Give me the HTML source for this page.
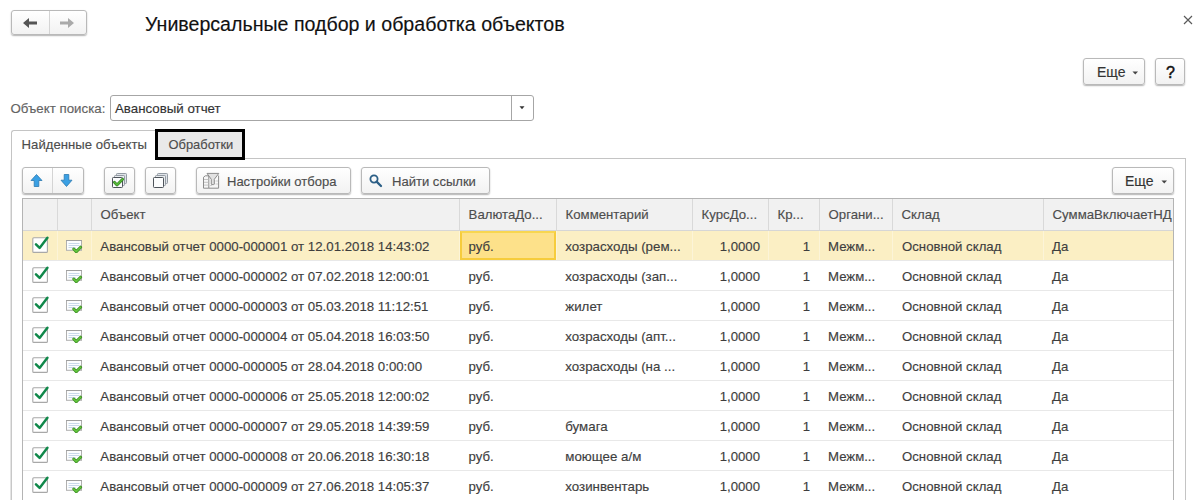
<!DOCTYPE html>
<html><head><meta charset="utf-8">
<style>
*{box-sizing:border-box;margin:0;padding:0}
html,body{width:1200px;height:500px;overflow:hidden;background:#fff}
body{position:relative;font-family:"Liberation Sans",sans-serif;font-size:13px;color:#4d4d4d}
.a{position:absolute}
.t{position:absolute;white-space:pre;line-height:1;-webkit-text-stroke:0.15px currentColor}
.b{position:absolute;border:1px solid #b9b9b9;border-radius:3px;background:linear-gradient(#fff,#f2f2f2);box-shadow:0 1px 1.5px rgba(0,0,0,.3)}
</style></head><body>
<div class="b" style="left:11px;top:10px;width:76px;height:25px"></div>
<div class="a" style="left:49px;top:11px;width:1px;height:23px;background:#d4d4d4"></div>
<svg class="a" style="left:22px;top:17px" width="16" height="12" viewBox="0 0 16 12"><path d="M1 6 L7 1 L7 4.5 L15 4.5 L15 7.5 L7 7.5 L7 11 Z" fill="#555"/></svg>
<svg class="a" style="left:59px;top:17px" width="16" height="12" viewBox="0 0 16 12"><path d="M15 6 L9 1 L9 4.5 L1 4.5 L1 7.5 L9 7.5 L9 11 Z" fill="#aaa"/></svg>
<div class="t" style="left:145px;top:14.6px;font-size:19.6px;color:#111;">Универсальные подбор и обработка объектов</div>
<svg class="a" style="left:1183px;top:15px" width="10" height="10" viewBox="0 0 10 10"><path d="M1 1 L9 9 M9 1 L1 9" stroke="#5a5a5a" stroke-width="1.15"/></svg>
<div class="b" style="left:1083px;top:58px;width:62px;height:27px"></div>
<div class="t" style="left:1097px;top:64.5px;font-size:14px;color:#333;">Еще</div>
<svg class="a" style="left:1132px;top:71px" width="7" height="4" viewBox="0 0 7 4"><path d="M0.5 0.5 L6 0.5 L3.25 3.5Z" fill="#444"/></svg>
<div class="b" style="left:1155px;top:58px;width:30px;height:27px"></div>
<div class="t" style="left:1166px;top:64.5px;font-size:16px;color:#111;-webkit-text-stroke:0.5px #111">?</div>
<div class="t" style="left:10.5px;top:102px;font-size:13.3px;color:#636363;">Объект поиска:</div>
<div class="a" style="left:110px;top:95px;width:424px;height:26px;border:1px solid #a6a6a6;border-radius:3px;background:#fff"></div>
<div class="a" style="left:511px;top:96px;width:1px;height:24px;background:#a6a6a6"></div>
<svg class="a" style="left:519px;top:106px" width="6" height="4" viewBox="0 0 6 4"><path d="M0.5 0.2 L5.5 0.2 L3 3.2Z" fill="#333"/></svg>
<div class="t" style="left:115px;top:102px;font-size:13.3px;color:#333;">Авансовый отчет</div>
<div class="a" style="left:11px;top:130px;width:146px;height:40px;border:1px solid #c4c4c4;border-bottom:none;border-right:none;border-radius:3px 0 0 0"></div>
<div class="a" style="left:10px;top:160px;width:1px;height:340px;background:#e4e4e4"></div>
<div class="a" style="left:11px;top:160px;width:1px;height:340px;background:#c8c8c8"></div>
<div class="a" style="left:245px;top:158px;width:941px;height:1px;background:#c4c4c4"></div>
<div class="t" style="left:21.6px;top:137.6px;font-size:13.15px;color:#4d4d4d;">Найденные объекты</div>
<div class="a" style="left:155px;top:129px;width:90px;height:31px;border:3px solid #000;background:#e9e9e9"></div>
<div class="t" style="left:168.5px;top:138.8px;font-size:12.9px;color:#4d4d4d;">Обработки</div>
<div class="b" style="left:22px;top:167px;width:62px;height:27px"></div>
<div class="a" style="left:52px;top:168px;width:1px;height:25px;background:#d4d4d4"></div>
<svg class="a" style="left:30px;top:174px" width="13" height="13" viewBox="0 0 13 13"><path d="M6.5 0.5 L12 6.5 L8.8 6.5 L8.8 12.5 L4.2 12.5 L4.2 6.5 L1 6.5 Z" fill="#3aa0e4" stroke="#2b78b0" stroke-width="0.8"/></svg>
<svg class="a" style="left:60px;top:174px" width="13" height="13" viewBox="0 0 13 13"><path d="M6.5 12.5 L12 6.2 L8.8 6.2 L8.8 0.5 L4.2 0.5 L4.2 6.2 L1 6.2 Z" fill="#3aa0e4" stroke="#2b78b0" stroke-width="0.8"/></svg>
<div class="b" style="left:104px;top:167px;width:31px;height:27px"></div>
<svg class="a" style="left:111px;top:172px" width="18" height="18" viewBox="0 0 18 18"><rect x="5.5" y="1.5" width="10" height="10" rx="0.8" fill="#dfe3e8" stroke="#939ba3"/><rect x="3.5" y="3.5" width="10" height="10" rx="0.8" fill="#e9ecef" stroke="#939ba3"/><rect x="1.5" y="5.5" width="10" height="10" rx="0.8" fill="#fbfcfd" stroke="#4d535a"/><path d="M3.4 10.3 L6 12.9 L11.6 7.2" fill="none" stroke="#2e7d1e" stroke-width="2.8" stroke-linecap="round" stroke-linejoin="round"/><path d="M3.4 10.3 L6 12.9 L11.6 7.2" fill="none" stroke="#58bb3a" stroke-width="1.5" stroke-linecap="round" stroke-linejoin="round"/></svg>
<div class="b" style="left:145px;top:167px;width:31px;height:27px"></div>
<svg class="a" style="left:152px;top:172px" width="18" height="18" viewBox="0 0 18 18"><rect x="5.5" y="1.5" width="10" height="10" rx="0.8" fill="#dfe3e8" stroke="#939ba3"/><rect x="3.5" y="3.5" width="10" height="10" rx="0.8" fill="#e9ecef" stroke="#939ba3"/><rect x="1.5" y="5.5" width="10" height="10" rx="0.8" fill="#fbfcfd" stroke="#4d535a"/></svg>
<div class="b" style="left:196px;top:167px;width:155px;height:27px"></div>
<svg class="a" style="left:202px;top:172px" width="18" height="18" viewBox="0 0 18 18"><path d="M1.5 16.2 V5.2 L3.3 3.8 H6.8 V16.2 Z" fill="#f6f6f6" stroke="#8c8c8c"/><path d="M2 7.5h4.3M2 10.3h4.3M2 13.1h4.3" stroke="#c4c4c4"/><path d="M6.8 16.2 H16.6 V3.5" fill="none" stroke="#8c8c8c"/><path d="M5 1.4 H16.8 L12.3 7.3 V12 Q12.3 12.6 11.6 12.6 H10 Q9.3 12.6 9.3 12 V7.3 Z" fill="#e2e2e2" stroke="#8c8c8c"/><path d="M8 13.5h2M13.5 9h2.5M13.5 12h2.5" stroke="#cfcfcf"/></svg>
<div class="t" style="left:227px;top:175px;font-size:13px;color:#4d4d4d;">Настройки отбора</div>
<div class="b" style="left:361px;top:167px;width:129px;height:27px"></div>
<svg class="a" style="left:369px;top:174px" width="14" height="14" viewBox="0 0 14 14"><circle cx="5" cy="5" r="3.6" fill="none" stroke="#2c5f86" stroke-width="1.8"/><path d="M7.6 7.6 L12 12" stroke="#2c5f86" stroke-width="2.3" stroke-linecap="round"/></svg>
<div class="t" style="left:392px;top:175px;font-size:13.05px;color:#4d4d4d;">Найти ссылки</div>
<div class="b" style="left:1112px;top:167px;width:62px;height:27px"></div>
<div class="t" style="left:1125px;top:173.5px;font-size:14px;color:#333;">Еще</div>
<svg class="a" style="left:1161px;top:180px" width="7" height="4" viewBox="0 0 7 4"><path d="M0.5 0.5 L6 0.5 L3.25 3.5Z" fill="#444"/></svg>
<div class="a" style="left:22px;top:198px;width:1152px;height:1px;background:#b4b4b4"></div>
<div class="a" style="left:22px;top:198px;width:1px;height:302px;background:#b4b4b4"></div>
<div class="a" style="left:1173px;top:198px;width:1px;height:302px;background:#b4b4b4"></div>
<div class="a" style="left:23px;top:199px;width:1150px;height:31px;background:#f1f1f1"></div>
<div class="a" style="left:23px;top:230px;width:1150px;height:1px;background:#d6d6d6"></div>
<div class="a" style="left:57px;top:199px;width:1px;height:31px;background:#d9d9d9"></div>
<div class="a" style="left:91px;top:199px;width:1px;height:31px;background:#d9d9d9"></div>
<div class="a" style="left:459px;top:199px;width:1px;height:31px;background:#d9d9d9"></div>
<div class="a" style="left:556px;top:199px;width:1px;height:31px;background:#d9d9d9"></div>
<div class="a" style="left:692px;top:199px;width:1px;height:31px;background:#d9d9d9"></div>
<div class="a" style="left:768px;top:199px;width:1px;height:31px;background:#d9d9d9"></div>
<div class="a" style="left:819px;top:199px;width:1px;height:31px;background:#d9d9d9"></div>
<div class="a" style="left:892px;top:199px;width:1px;height:31px;background:#d9d9d9"></div>
<div class="a" style="left:1043px;top:199px;width:1px;height:31px;background:#d9d9d9"></div>
<div class="t" style="left:100.6px;top:208px;font-size:13.2px;color:#4d4d4d;">Объект</div>
<div class="t" style="left:468.6px;top:208px;font-size:13.2px;color:#4d4d4d;">ВалютаДо...</div>
<div class="t" style="left:565.6px;top:208px;font-size:13.2px;color:#4d4d4d;">Комментарий</div>
<div class="t" style="left:701.6px;top:208px;font-size:13.2px;color:#4d4d4d;">КурсДо...</div>
<div class="t" style="left:777.6px;top:208px;font-size:13.2px;color:#4d4d4d;">Кр...</div>
<div class="t" style="left:828.6px;top:208px;font-size:13.2px;color:#4d4d4d;">Органи...</div>
<div class="t" style="left:901.6px;top:208px;font-size:13.2px;color:#4d4d4d;">Склад</div>
<div class="t" style="left:1052.6px;top:208px;font-size:13.2px;color:#4d4d4d;">СуммаВключаетНД</div>
<div class="a" style="left:23px;top:231px;width:1150px;height:29px;background:#fbefc4"></div>
<div class="a" style="left:57px;top:231px;width:1px;height:29px;background:#fcf4d8"></div>
<div class="a" style="left:91px;top:231px;width:1px;height:29px;background:#fcf4d8"></div>
<div class="a" style="left:459px;top:231px;width:1px;height:29px;background:#fcf4d8"></div>
<div class="a" style="left:556px;top:231px;width:1px;height:29px;background:#fcf4d8"></div>
<div class="a" style="left:692px;top:231px;width:1px;height:29px;background:#fcf4d8"></div>
<div class="a" style="left:768px;top:231px;width:1px;height:29px;background:#fcf4d8"></div>
<div class="a" style="left:819px;top:231px;width:1px;height:29px;background:#fcf4d8"></div>
<div class="a" style="left:892px;top:231px;width:1px;height:29px;background:#fcf4d8"></div>
<div class="a" style="left:1043px;top:231px;width:1px;height:29px;background:#fcf4d8"></div>
<div class="a" style="left:460px;top:231px;width:96px;height:29px;background:#fde18a;border:2px solid #f6cc3c;border-top-color:#f8d650;border-bottom-color:#f6cc3c"></div>
<div class="a" style="left:23px;top:260px;width:1150px;height:1px;background:#e8e8e8"></div>
<svg class="a" style="left:31px;top:236px" width="18" height="18" viewBox="0 0 18 18"><rect x="1.8" y="1.8" width="14.6" height="14.6" rx="1" fill="#fff" stroke="#a8a8a8" stroke-width="1.1"/><path d="M5 8.3 L8.6 11.9 L16.4 1.8" fill="none" stroke="#10884a" stroke-width="2.5" stroke-linecap="round" stroke-linejoin="round"/></svg>
<svg class="a" style="left:65px;top:239px" width="18" height="14" viewBox="0 0 18 14"><rect x="1.5" y="1.5" width="15" height="9.8" fill="#fcfdfe" stroke="#b0b0b0"/><path d="M1 1.5h16" stroke="#a0a0a0"/><path d="M3.5 4.5h11M3.5 6.5h11M3.5 8.5h7" stroke="#c2d4e8" stroke-width="0.9"/><path d="M8.8 10 L11.3 12.6 L15.6 8.2" fill="none" stroke="#3a8a22" stroke-width="3" stroke-linecap="round" stroke-linejoin="round"/><path d="M8.8 10 L11.3 12.6 L15.6 8.2" fill="none" stroke="#62c43c" stroke-width="1.6" stroke-linecap="round" stroke-linejoin="round"/></svg>
<div class="t" style="left:100.3px;top:240px;font-size:13.25px;color:#3e3e3e;">Авансовый отчет 0000-000001 от 12.01.2018 14:43:02</div>
<div class="t" style="left:468.6px;top:240px;font-size:13.2px;color:#3e3e3e;">руб.</div>
<div class="t" style="left:565.3px;top:240px;font-size:13.3px;color:#3e3e3e;">хозрасходы (рем...</div>
<div class="t" style="right:440px;top:240px;font-size:13.2px;color:#3e3e3e">1,0000</div>
<div class="t" style="right:390px;top:240px;font-size:13.2px;color:#3e3e3e">1</div>
<div class="t" style="left:828px;top:240px;font-size:13.2px;color:#3e3e3e;">Межм...</div>
<div class="t" style="left:902px;top:240px;font-size:13.2px;color:#3e3e3e;">Основной склад</div>
<div class="t" style="left:1052px;top:240px;font-size:13.2px;color:#3e3e3e;">Да</div>
<div class="a" style="left:23px;top:290px;width:1150px;height:1px;background:#e8e8e8"></div>
<svg class="a" style="left:31px;top:266px" width="18" height="18" viewBox="0 0 18 18"><rect x="1.8" y="1.8" width="14.6" height="14.6" rx="1" fill="#fff" stroke="#a8a8a8" stroke-width="1.1"/><path d="M5 8.3 L8.6 11.9 L16.4 1.8" fill="none" stroke="#10884a" stroke-width="2.5" stroke-linecap="round" stroke-linejoin="round"/></svg>
<svg class="a" style="left:65px;top:269px" width="18" height="14" viewBox="0 0 18 14"><rect x="1.5" y="1.5" width="15" height="9.8" fill="#fcfdfe" stroke="#b0b0b0"/><path d="M1 1.5h16" stroke="#a0a0a0"/><path d="M3.5 4.5h11M3.5 6.5h11M3.5 8.5h7" stroke="#c2d4e8" stroke-width="0.9"/><path d="M8.8 10 L11.3 12.6 L15.6 8.2" fill="none" stroke="#3a8a22" stroke-width="3" stroke-linecap="round" stroke-linejoin="round"/><path d="M8.8 10 L11.3 12.6 L15.6 8.2" fill="none" stroke="#62c43c" stroke-width="1.6" stroke-linecap="round" stroke-linejoin="round"/></svg>
<div class="t" style="left:100.3px;top:270px;font-size:13.25px;color:#3e3e3e;">Авансовый отчет 0000-000002 от 07.02.2018 12:00:01</div>
<div class="t" style="left:468.6px;top:270px;font-size:13.2px;color:#3e3e3e;">руб.</div>
<div class="t" style="left:565.3px;top:270px;font-size:13.3px;color:#3e3e3e;">хозрасходы (зап...</div>
<div class="t" style="right:440px;top:270px;font-size:13.2px;color:#3e3e3e">1,0000</div>
<div class="t" style="right:390px;top:270px;font-size:13.2px;color:#3e3e3e">1</div>
<div class="t" style="left:828px;top:270px;font-size:13.2px;color:#3e3e3e;">Межм...</div>
<div class="t" style="left:902px;top:270px;font-size:13.2px;color:#3e3e3e;">Основной склад</div>
<div class="t" style="left:1052px;top:270px;font-size:13.2px;color:#3e3e3e;">Да</div>
<div class="a" style="left:23px;top:320px;width:1150px;height:1px;background:#e8e8e8"></div>
<svg class="a" style="left:31px;top:296px" width="18" height="18" viewBox="0 0 18 18"><rect x="1.8" y="1.8" width="14.6" height="14.6" rx="1" fill="#fff" stroke="#a8a8a8" stroke-width="1.1"/><path d="M5 8.3 L8.6 11.9 L16.4 1.8" fill="none" stroke="#10884a" stroke-width="2.5" stroke-linecap="round" stroke-linejoin="round"/></svg>
<svg class="a" style="left:65px;top:299px" width="18" height="14" viewBox="0 0 18 14"><rect x="1.5" y="1.5" width="15" height="9.8" fill="#fcfdfe" stroke="#b0b0b0"/><path d="M1 1.5h16" stroke="#a0a0a0"/><path d="M3.5 4.5h11M3.5 6.5h11M3.5 8.5h7" stroke="#c2d4e8" stroke-width="0.9"/><path d="M8.8 10 L11.3 12.6 L15.6 8.2" fill="none" stroke="#3a8a22" stroke-width="3" stroke-linecap="round" stroke-linejoin="round"/><path d="M8.8 10 L11.3 12.6 L15.6 8.2" fill="none" stroke="#62c43c" stroke-width="1.6" stroke-linecap="round" stroke-linejoin="round"/></svg>
<div class="t" style="left:100.3px;top:300px;font-size:13.25px;color:#3e3e3e;">Авансовый отчет 0000-000003 от 05.03.2018 11:12:51</div>
<div class="t" style="left:468.6px;top:300px;font-size:13.2px;color:#3e3e3e;">руб.</div>
<div class="t" style="left:565.3px;top:300px;font-size:13.3px;color:#3e3e3e;">жилет</div>
<div class="t" style="right:440px;top:300px;font-size:13.2px;color:#3e3e3e">1,0000</div>
<div class="t" style="right:390px;top:300px;font-size:13.2px;color:#3e3e3e">1</div>
<div class="t" style="left:828px;top:300px;font-size:13.2px;color:#3e3e3e;">Межм...</div>
<div class="t" style="left:902px;top:300px;font-size:13.2px;color:#3e3e3e;">Основной склад</div>
<div class="t" style="left:1052px;top:300px;font-size:13.2px;color:#3e3e3e;">Да</div>
<div class="a" style="left:23px;top:350px;width:1150px;height:1px;background:#e8e8e8"></div>
<svg class="a" style="left:31px;top:326px" width="18" height="18" viewBox="0 0 18 18"><rect x="1.8" y="1.8" width="14.6" height="14.6" rx="1" fill="#fff" stroke="#a8a8a8" stroke-width="1.1"/><path d="M5 8.3 L8.6 11.9 L16.4 1.8" fill="none" stroke="#10884a" stroke-width="2.5" stroke-linecap="round" stroke-linejoin="round"/></svg>
<svg class="a" style="left:65px;top:329px" width="18" height="14" viewBox="0 0 18 14"><rect x="1.5" y="1.5" width="15" height="9.8" fill="#fcfdfe" stroke="#b0b0b0"/><path d="M1 1.5h16" stroke="#a0a0a0"/><path d="M3.5 4.5h11M3.5 6.5h11M3.5 8.5h7" stroke="#c2d4e8" stroke-width="0.9"/><path d="M8.8 10 L11.3 12.6 L15.6 8.2" fill="none" stroke="#3a8a22" stroke-width="3" stroke-linecap="round" stroke-linejoin="round"/><path d="M8.8 10 L11.3 12.6 L15.6 8.2" fill="none" stroke="#62c43c" stroke-width="1.6" stroke-linecap="round" stroke-linejoin="round"/></svg>
<div class="t" style="left:100.3px;top:330px;font-size:13.25px;color:#3e3e3e;">Авансовый отчет 0000-000004 от 05.04.2018 16:03:50</div>
<div class="t" style="left:468.6px;top:330px;font-size:13.2px;color:#3e3e3e;">руб.</div>
<div class="t" style="left:565.3px;top:330px;font-size:13.3px;color:#3e3e3e;">хозрасходы (апт...</div>
<div class="t" style="right:440px;top:330px;font-size:13.2px;color:#3e3e3e">1,0000</div>
<div class="t" style="right:390px;top:330px;font-size:13.2px;color:#3e3e3e">1</div>
<div class="t" style="left:828px;top:330px;font-size:13.2px;color:#3e3e3e;">Межм...</div>
<div class="t" style="left:902px;top:330px;font-size:13.2px;color:#3e3e3e;">Основной склад</div>
<div class="t" style="left:1052px;top:330px;font-size:13.2px;color:#3e3e3e;">Да</div>
<div class="a" style="left:23px;top:380px;width:1150px;height:1px;background:#e8e8e8"></div>
<svg class="a" style="left:31px;top:356px" width="18" height="18" viewBox="0 0 18 18"><rect x="1.8" y="1.8" width="14.6" height="14.6" rx="1" fill="#fff" stroke="#a8a8a8" stroke-width="1.1"/><path d="M5 8.3 L8.6 11.9 L16.4 1.8" fill="none" stroke="#10884a" stroke-width="2.5" stroke-linecap="round" stroke-linejoin="round"/></svg>
<svg class="a" style="left:65px;top:359px" width="18" height="14" viewBox="0 0 18 14"><rect x="1.5" y="1.5" width="15" height="9.8" fill="#fcfdfe" stroke="#b0b0b0"/><path d="M1 1.5h16" stroke="#a0a0a0"/><path d="M3.5 4.5h11M3.5 6.5h11M3.5 8.5h7" stroke="#c2d4e8" stroke-width="0.9"/><path d="M8.8 10 L11.3 12.6 L15.6 8.2" fill="none" stroke="#3a8a22" stroke-width="3" stroke-linecap="round" stroke-linejoin="round"/><path d="M8.8 10 L11.3 12.6 L15.6 8.2" fill="none" stroke="#62c43c" stroke-width="1.6" stroke-linecap="round" stroke-linejoin="round"/></svg>
<div class="t" style="left:100.3px;top:360px;font-size:13.25px;color:#3e3e3e;">Авансовый отчет 0000-000005 от 28.04.2018 0:00:00</div>
<div class="t" style="left:468.6px;top:360px;font-size:13.2px;color:#3e3e3e;">руб.</div>
<div class="t" style="left:565.3px;top:360px;font-size:13.3px;color:#3e3e3e;">хозрасходы (на ...</div>
<div class="t" style="right:440px;top:360px;font-size:13.2px;color:#3e3e3e">1,0000</div>
<div class="t" style="right:390px;top:360px;font-size:13.2px;color:#3e3e3e">1</div>
<div class="t" style="left:828px;top:360px;font-size:13.2px;color:#3e3e3e;">Межм...</div>
<div class="t" style="left:902px;top:360px;font-size:13.2px;color:#3e3e3e;">Основной склад</div>
<div class="t" style="left:1052px;top:360px;font-size:13.2px;color:#3e3e3e;">Да</div>
<div class="a" style="left:23px;top:410px;width:1150px;height:1px;background:#e8e8e8"></div>
<svg class="a" style="left:31px;top:386px" width="18" height="18" viewBox="0 0 18 18"><rect x="1.8" y="1.8" width="14.6" height="14.6" rx="1" fill="#fff" stroke="#a8a8a8" stroke-width="1.1"/><path d="M5 8.3 L8.6 11.9 L16.4 1.8" fill="none" stroke="#10884a" stroke-width="2.5" stroke-linecap="round" stroke-linejoin="round"/></svg>
<svg class="a" style="left:65px;top:389px" width="18" height="14" viewBox="0 0 18 14"><rect x="1.5" y="1.5" width="15" height="9.8" fill="#fcfdfe" stroke="#b0b0b0"/><path d="M1 1.5h16" stroke="#a0a0a0"/><path d="M3.5 4.5h11M3.5 6.5h11M3.5 8.5h7" stroke="#c2d4e8" stroke-width="0.9"/><path d="M8.8 10 L11.3 12.6 L15.6 8.2" fill="none" stroke="#3a8a22" stroke-width="3" stroke-linecap="round" stroke-linejoin="round"/><path d="M8.8 10 L11.3 12.6 L15.6 8.2" fill="none" stroke="#62c43c" stroke-width="1.6" stroke-linecap="round" stroke-linejoin="round"/></svg>
<div class="t" style="left:100.3px;top:390px;font-size:13.25px;color:#3e3e3e;">Авансовый отчет 0000-000006 от 25.05.2018 12:00:02</div>
<div class="t" style="left:468.6px;top:390px;font-size:13.2px;color:#3e3e3e;">руб.</div>
<div class="t" style="right:440px;top:390px;font-size:13.2px;color:#3e3e3e">1,0000</div>
<div class="t" style="right:390px;top:390px;font-size:13.2px;color:#3e3e3e">1</div>
<div class="t" style="left:828px;top:390px;font-size:13.2px;color:#3e3e3e;">Межм...</div>
<div class="t" style="left:902px;top:390px;font-size:13.2px;color:#3e3e3e;">Основной склад</div>
<div class="t" style="left:1052px;top:390px;font-size:13.2px;color:#3e3e3e;">Да</div>
<div class="a" style="left:23px;top:440px;width:1150px;height:1px;background:#e8e8e8"></div>
<svg class="a" style="left:31px;top:416px" width="18" height="18" viewBox="0 0 18 18"><rect x="1.8" y="1.8" width="14.6" height="14.6" rx="1" fill="#fff" stroke="#a8a8a8" stroke-width="1.1"/><path d="M5 8.3 L8.6 11.9 L16.4 1.8" fill="none" stroke="#10884a" stroke-width="2.5" stroke-linecap="round" stroke-linejoin="round"/></svg>
<svg class="a" style="left:65px;top:419px" width="18" height="14" viewBox="0 0 18 14"><rect x="1.5" y="1.5" width="15" height="9.8" fill="#fcfdfe" stroke="#b0b0b0"/><path d="M1 1.5h16" stroke="#a0a0a0"/><path d="M3.5 4.5h11M3.5 6.5h11M3.5 8.5h7" stroke="#c2d4e8" stroke-width="0.9"/><path d="M8.8 10 L11.3 12.6 L15.6 8.2" fill="none" stroke="#3a8a22" stroke-width="3" stroke-linecap="round" stroke-linejoin="round"/><path d="M8.8 10 L11.3 12.6 L15.6 8.2" fill="none" stroke="#62c43c" stroke-width="1.6" stroke-linecap="round" stroke-linejoin="round"/></svg>
<div class="t" style="left:100.3px;top:420px;font-size:13.25px;color:#3e3e3e;">Авансовый отчет 0000-000007 от 29.05.2018 14:39:59</div>
<div class="t" style="left:468.6px;top:420px;font-size:13.2px;color:#3e3e3e;">руб.</div>
<div class="t" style="left:565.3px;top:420px;font-size:13.3px;color:#3e3e3e;">бумага</div>
<div class="t" style="right:440px;top:420px;font-size:13.2px;color:#3e3e3e">1,0000</div>
<div class="t" style="right:390px;top:420px;font-size:13.2px;color:#3e3e3e">1</div>
<div class="t" style="left:828px;top:420px;font-size:13.2px;color:#3e3e3e;">Межм...</div>
<div class="t" style="left:902px;top:420px;font-size:13.2px;color:#3e3e3e;">Основной склад</div>
<div class="t" style="left:1052px;top:420px;font-size:13.2px;color:#3e3e3e;">Да</div>
<div class="a" style="left:23px;top:470px;width:1150px;height:1px;background:#e8e8e8"></div>
<svg class="a" style="left:31px;top:446px" width="18" height="18" viewBox="0 0 18 18"><rect x="1.8" y="1.8" width="14.6" height="14.6" rx="1" fill="#fff" stroke="#a8a8a8" stroke-width="1.1"/><path d="M5 8.3 L8.6 11.9 L16.4 1.8" fill="none" stroke="#10884a" stroke-width="2.5" stroke-linecap="round" stroke-linejoin="round"/></svg>
<svg class="a" style="left:65px;top:449px" width="18" height="14" viewBox="0 0 18 14"><rect x="1.5" y="1.5" width="15" height="9.8" fill="#fcfdfe" stroke="#b0b0b0"/><path d="M1 1.5h16" stroke="#a0a0a0"/><path d="M3.5 4.5h11M3.5 6.5h11M3.5 8.5h7" stroke="#c2d4e8" stroke-width="0.9"/><path d="M8.8 10 L11.3 12.6 L15.6 8.2" fill="none" stroke="#3a8a22" stroke-width="3" stroke-linecap="round" stroke-linejoin="round"/><path d="M8.8 10 L11.3 12.6 L15.6 8.2" fill="none" stroke="#62c43c" stroke-width="1.6" stroke-linecap="round" stroke-linejoin="round"/></svg>
<div class="t" style="left:100.3px;top:450px;font-size:13.25px;color:#3e3e3e;">Авансовый отчет 0000-000008 от 20.06.2018 16:30:18</div>
<div class="t" style="left:468.6px;top:450px;font-size:13.2px;color:#3e3e3e;">руб.</div>
<div class="t" style="left:565.3px;top:450px;font-size:13.3px;color:#3e3e3e;">моющее а/м</div>
<div class="t" style="right:440px;top:450px;font-size:13.2px;color:#3e3e3e">1,0000</div>
<div class="t" style="right:390px;top:450px;font-size:13.2px;color:#3e3e3e">1</div>
<div class="t" style="left:828px;top:450px;font-size:13.2px;color:#3e3e3e;">Межм...</div>
<div class="t" style="left:902px;top:450px;font-size:13.2px;color:#3e3e3e;">Основной склад</div>
<div class="t" style="left:1052px;top:450px;font-size:13.2px;color:#3e3e3e;">Да</div>
<div class="a" style="left:23px;top:500px;width:1150px;height:1px;background:#e8e8e8"></div>
<svg class="a" style="left:31px;top:476px" width="18" height="18" viewBox="0 0 18 18"><rect x="1.8" y="1.8" width="14.6" height="14.6" rx="1" fill="#fff" stroke="#a8a8a8" stroke-width="1.1"/><path d="M5 8.3 L8.6 11.9 L16.4 1.8" fill="none" stroke="#10884a" stroke-width="2.5" stroke-linecap="round" stroke-linejoin="round"/></svg>
<svg class="a" style="left:65px;top:479px" width="18" height="14" viewBox="0 0 18 14"><rect x="1.5" y="1.5" width="15" height="9.8" fill="#fcfdfe" stroke="#b0b0b0"/><path d="M1 1.5h16" stroke="#a0a0a0"/><path d="M3.5 4.5h11M3.5 6.5h11M3.5 8.5h7" stroke="#c2d4e8" stroke-width="0.9"/><path d="M8.8 10 L11.3 12.6 L15.6 8.2" fill="none" stroke="#3a8a22" stroke-width="3" stroke-linecap="round" stroke-linejoin="round"/><path d="M8.8 10 L11.3 12.6 L15.6 8.2" fill="none" stroke="#62c43c" stroke-width="1.6" stroke-linecap="round" stroke-linejoin="round"/></svg>
<div class="t" style="left:100.3px;top:480px;font-size:13.25px;color:#3e3e3e;">Авансовый отчет 0000-000009 от 27.06.2018 14:05:37</div>
<div class="t" style="left:468.6px;top:480px;font-size:13.2px;color:#3e3e3e;">руб.</div>
<div class="t" style="left:565.3px;top:480px;font-size:13.3px;color:#3e3e3e;">хозинвентарь</div>
<div class="t" style="right:440px;top:480px;font-size:13.2px;color:#3e3e3e">1,0000</div>
<div class="t" style="right:390px;top:480px;font-size:13.2px;color:#3e3e3e">1</div>
<div class="t" style="left:828px;top:480px;font-size:13.2px;color:#3e3e3e;">Межм...</div>
<div class="t" style="left:902px;top:480px;font-size:13.2px;color:#3e3e3e;">Основной склад</div>
<div class="t" style="left:1052px;top:480px;font-size:13.2px;color:#3e3e3e;">Да</div>
<div class="a" style="left:1174px;top:199px;width:11px;height:301px;background:#fff"></div>
<div class="a" style="left:1185px;top:158px;width:1px;height:342px;background:#c4c4c4"></div>
</body></html>
